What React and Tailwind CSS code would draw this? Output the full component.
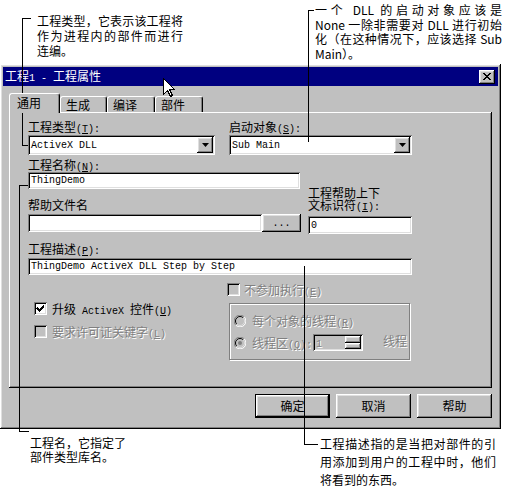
import React from 'react';

// Win95 style bevels
const raised = 'shadow-[inset_-1px_-1px_#000000,inset_1px_1px_#ffffff,inset_-2px_-2px_#808080,inset_2px_2px_#dfdfdf]';
const sunken = 'shadow-[inset_1px_1px_#808080,inset_-1px_-1px_#ffffff,inset_2px_2px_#000000,inset_-2px_-2px_#dfdfdf]';
const grayed = 'text-[#808080] [text-shadow:1px_1px_0_#ffffff]';

const A = ({ children }) => (
  <span className="font-['Liberation_Mono',monospace] text-[10px]">{children}</span>
);

const Hk = ({ k, colon }) => (
  <A>
    (<span className="underline">{k}</span>){colon ? ':' : ''}
  </A>
);

const Label = ({ children, className = '' }) => (
  <div className={`h-[12px] leading-[12px] whitespace-nowrap ${className}`}>{children}</div>
);

const TextBox = ({ value, className = '' }) => (
  <div className={`bg-white pl-[3px] flex items-center ${sunken} ${className}`}>
    <A>{value}</A>
  </div>
);

const Combo = ({ value, className = '' }) => (
  <div className={`h-[20px] bg-white flex items-center pl-[3px] pr-[2px] ${sunken} ${className}`}>
    <A>{value}</A>
    <div className={`ml-auto w-[16px] h-[16px] bg-[#c0c0c0] flex items-center justify-center ${raised}`}>
      <svg width="7" height="4" viewBox="0 0 7 4">
        <path d="M0 0 H7 L3.5 4 Z" fill="#000" />
      </svg>
    </div>
  </div>
);

const Check = ({ checked, disabled }) => (
  <div className={`w-[13px] h-[13px] shrink-0 flex items-center justify-center ${disabled ? 'bg-[#c0c0c0]' : 'bg-white'} ${sunken}`}>
    {checked && (
      <svg width="9" height="9" viewBox="0 0 9 9" shapeRendering="crispEdges">
        <path d="M1 3h1v1h1v1h1v-1h1v-1h1v-1h1v-1h1v3h-1v1h-1v1h-1v1h-1v1h-1v-1h-1v-1h-1v-1h-1z" fill="#000" />
      </svg>
    )}
  </div>
);

const Radio = ({ checked }) => (
  <svg width="12" height="12" viewBox="0 0 12 12" className="shrink-0">
    <circle cx="6" cy="6" r="5" fill="#c0c0c0" />
    <path d="M10.2 1.8 A5.9 5.9 0 0 0 1.8 10.2" stroke="#808080" fill="none" />
    <path d="M1.8 10.2 A5.9 5.9 0 0 0 10.2 1.8" stroke="#ffffff" fill="none" />
    <path d="M9.2 2.8 A4.5 4.5 0 0 0 2.8 9.2" stroke="#000000" fill="none" />
    <path d="M2.8 9.2 A4.5 4.5 0 0 0 9.2 2.8" stroke="#dfdfdf" fill="none" />
    {checked && <circle cx="6" cy="6" r="2" fill="#808080" />}
  </svg>
);

const Button = ({ children, def }) => (
  <div className={`w-[75px] h-[24px] bg-[#c0c0c0] flex items-center justify-center ${def ? 'border border-black' : ''} ${raised}`}>
    {children}
  </div>
);

const Tab = ({ children, active, w }) => (
  <div
    className={`${w} bg-[#c0c0c0] border-t border-l border-white border-r border-r-black rounded-tl-[3px] rounded-tr-[3px] shadow-[inset_-1px_0_#808080] flex items-center ${
      active ? 'relative z-10 h-[20px] -mb-[1px] pl-[7px] pb-[1px]' : 'h-[16px] pl-[5px]'
    }`}
  >
    {children}
  </div>
);

export default function App() {
  return (
    <div className="relative w-[507px] h-[486px] bg-white overflow-hidden font-['Noto_Sans_CJK_SC',sans-serif] text-[12px] text-black">
      {/* top callouts */}
      <div className="flex h-[64px] items-start">
        <div className="ml-[37px] mt-[13px] w-[146px] leading-[15px]">
          <div className="text-justify [text-align-last:justify]">工程类型，它表示该工程将</div>
          <div className="text-justify [text-align-last:justify]">作为进程内的部件而进行</div>
          <div>连编。</div>
        </div>
        <div className="ml-[132px] mt-[3px] w-[187px] leading-[14.5px]">
          <div className="text-justify [text-align-last:justify]">一个 DLL 的启动对象应该是</div>
          <div className="text-justify [text-align-last:justify]">None 一除非需要对 DLL 进行初始</div>
          <div className="text-justify [text-align-last:justify]">化（在这种情况下，应该选择 Sub</div>
          <div>Main）。</div>
        </div>
      </div>

      {/* dialog */}
      <div className={`w-[501px] h-[365px] bg-[#c0c0c0] p-[3px] flex flex-col ${raised}`}>
        <div className="h-[19px] bg-[#000080] flex items-center pl-[2px] pr-[3px] text-white">
          <span>
            工程<A>1 - </A>工程属性
          </span>
          <div className={`ml-auto w-[16px] h-[14px] bg-[#c0c0c0] flex items-center justify-center ${raised}`}>
            <svg width="8" height="7" viewBox="0 0 8 7" shapeRendering="crispEdges">
              <path d="M0 0h2v1h1v1h2v-1h1v-1h2v1h-1v1h-1v1h-1v1h1v1h1v1h1v1h-2v-1h-1v-1h-2v1h-1v1h-2v-1h1v-1h1v-1h1v-1h-1v-1h-1v-1h-1z" fill="#000" />
            </svg>
          </div>
        </div>

        {/* tabs */}
        <div className="mt-[7px] px-[6px] flex items-end h-[19px]">
          <Tab active w="w-[51px]">通用</Tab>
          <Tab w="w-[47px]">生成</Tab>
          <Tab w="w-[48px]">编译</Tab>
          <Tab w="w-[48px]">部件</Tab>
        </div>

        {/* panel */}
        <div className="mx-[6px] h-[276px] pl-[19px] pt-[9px] shadow-[inset_-1px_-1px_#000000,inset_1px_1px_#ffffff,inset_-2px_-2px_#808080]">
          <div className="flex">
            <Label className="w-[201px]">
              工程类型<Hk k="T" colon />
            </Label>
            <Label>
              启动对象<Hk k="S" colon />
            </Label>
          </div>
          <div className="flex mt-[2px]">
            <Combo value="ActiveX DLL" className="w-[187px]" />
            <Combo value="Sub Main" className="w-[183px] ml-[14px]" />
          </div>
          <Label className="mt-[4px]">
            工程名称<Hk k="N" colon />
          </Label>

          <div className="flex mt-[1px]">
            <div className="w-[280px]">
              <TextBox value="ThingDemo" className="w-[272px] h-[17px]" />
              <Label className="mt-[10px]">帮助文件名</Label>
              <div className="flex mt-[3px]">
                <TextBox value="" className="w-[234px] h-[18px]" />
                <div className={`w-[39px] h-[18px] bg-[#c0c0c0] flex items-center justify-center ${raised}`}>
                  <A>...</A>
                </div>
              </div>
            </div>
            <div className="w-[104px]">
              <div className="mt-[15px] leading-[12px]">
                <div>工程帮助上下</div>
                <div>
                  文标识符<Hk k="I" colon />
                </div>
              </div>
              <TextBox value="0" className="mt-[2px] w-[104px] h-[18px]" />
            </div>
          </div>

          <Label className="mt-[9px]">
            工程描述<Hk k="P" colon />
          </Label>
          <TextBox value="ThingDemo ActiveX DLL Step by Step" className="mt-[3px] w-[384px] h-[17px]" />

          <div className="flex mt-[8px]">
            <div className="w-[199px]">
              <div className="flex items-center gap-[5px] ml-[6px] mt-[19px]">
                <Check checked />
                <Label>
                  升级<A> ActiveX </A>控件<Hk k="U" />
                </Label>
              </div>
              <div className="flex items-center gap-[5px] ml-[6px] mt-[10px]">
                <Check disabled />
                <Label className={grayed}>
                  要求许可证关键字<Hk k="L" />
                </Label>
              </div>
            </div>
            <div>
              <div className="flex items-center gap-[4px] h-[13px]">
                <Check disabled />
                <Label className={grayed}>
                  不参加执行<Hk k="E" />
                </Label>
              </div>
              <div className="ml-[2px] mt-[7px] w-[181px] h-[57px] border border-[#808080] shadow-[1px_1px_#ffffff,inset_1px_1px_#ffffff] pl-[4px] pt-[11px]">
                <div className="flex items-center gap-[6px] h-[12px]">
                  <Radio />
                  <Label className={grayed}>
                    每个对象的线程<Hk k="R" />
                  </Label>
                </div>
                <div className="flex items-center mt-[7px] h-[17px]">
                  <Radio checked />
                  <Label className={`ml-[6px] w-[61px] ${grayed}`}>
                    线程区<Hk k="Q" colon />
                  </Label>
                  <div className={`w-[50px] h-[17px] bg-[#c0c0c0] flex items-center pl-[3px] pr-[2px] ${sunken}`}>
                    <span className={grayed}>
                      <A>1</A>
                    </span>
                    <div className="ml-auto w-[16px] h-[13px] flex flex-col">
                      <div className={`h-[7px] bg-[#c0c0c0] ${raised}`} />
                      <div className={`h-[6px] bg-[#c0c0c0] ${raised}`} />
                    </div>
                  </div>
                  <Label className={`ml-[20px] -mt-[3px] ${grayed}`}>线程</Label>
                </div>
              </div>
            </div>
          </div>
        </div>

        {/* buttons */}
        <div className="mt-[6px] flex justify-end gap-[6px] pr-[6px]">
          <Button def>确定</Button>
          <Button>取消</Button>
          <Button>帮助</Button>
        </div>
      </div>

      {/* bottom callouts */}
      <div className="flex">
        <div className="ml-[30px] mt-[7px] w-[100px] leading-[14px]">
          <div>工程名，它指定了</div>
          <div>部件类型库名。</div>
        </div>
        <div className="ml-[190px] mt-[6px] w-[176px] leading-[18px]">
          <div className="text-justify [text-align-last:justify]">工程描述指的是当把对部件的引</div>
          <div className="text-justify [text-align-last:justify]">用添加到用户的工程中时，他们</div>
          <div className="mt-[3px] leading-[12px]">将看到的东西。</div>
        </div>
      </div>

      {/* leader lines */}
      <svg className="absolute inset-0 pointer-events-none" width="507" height="486" viewBox="0 0 507 486" shapeRendering="crispEdges">
        <path d="M31 18.5 H22.5 V145.5 H28" stroke="#000" fill="none" />
        <path d="M314 10.5 H308.5 V142" stroke="#000" fill="none" />
        <path d="M28 185.5 H19.5 V431.5 H29" stroke="#000" fill="none" />
        <path d="M304.5 266 V444.5 H318" stroke="#000" fill="none" />
      </svg>

      {/* mouse pointer */}
      <svg className="absolute left-[163px] top-[78px] pointer-events-none" width="12" height="19" viewBox="0 0 12 19" shapeRendering="crispEdges">
        <path d="M0.5 0.5 V16.5 L4.5 12.5 L7.5 18.5 L9.5 17.5 L6.5 11.5 H11.5 Z" fill="#fff" stroke="#000" />
      </svg>
    </div>
  );
}
